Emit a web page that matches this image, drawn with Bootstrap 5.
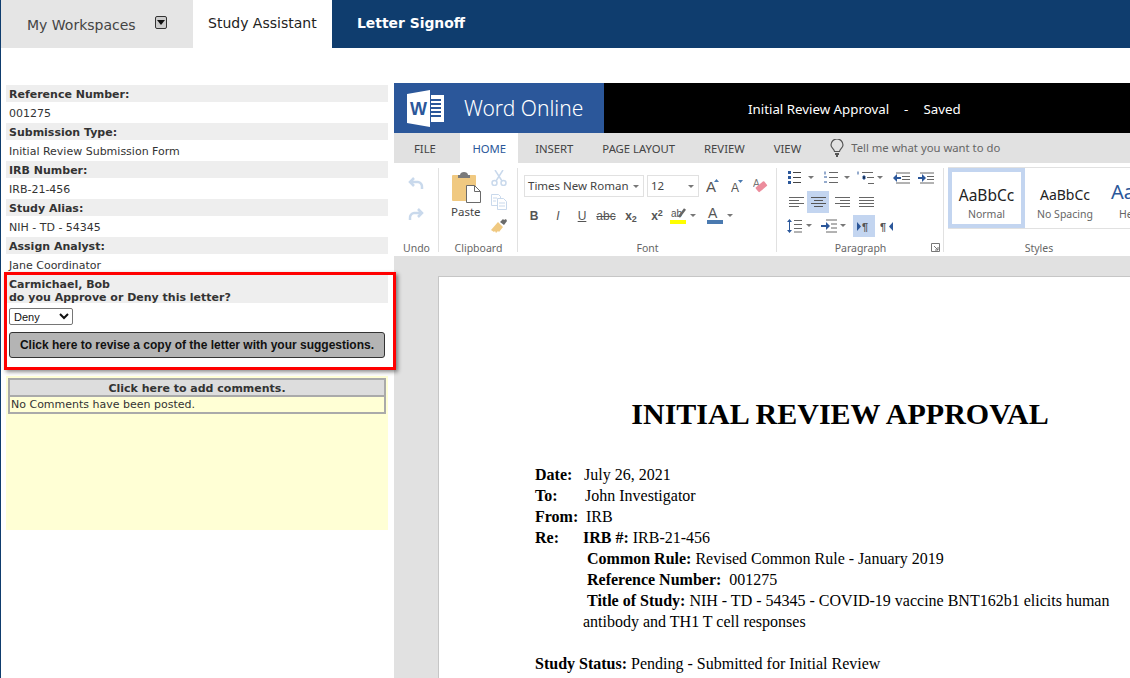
<!doctype html>
<html lang="en"><head><meta charset="utf-8"><title>Letter Signoff</title>
<link href="https://cdn.jsdelivr.net/npm/bootstrap@5.3.0/dist/css/bootstrap.min.css" rel="stylesheet">
<style>
html,body{height:678px;overflow:hidden;background:#fff}
body{font-family:"DejaVu Sans",sans-serif;color:#333;font-size:11px}
.shell{width:1130px;height:678px;border-left:1px solid #0f3d6e;background:#fff;overflow:hidden;position:relative}
.topbar{height:48px;background:#0f3d6e;margin-left:-1px;padding-left:1px;font-size:14px}
.tb-ws{width:192px;background:#e5e5e5;color:#444;padding:15px 0 0 26px}
.tb-sa{width:139px;background:#fff;color:#222;padding:13px 0 0 15px}
.tb-ls{color:#fff;font-weight:700;padding:13px 0 0 25px;font-size:13.9px}
.caret-box{width:12px;height:13px;border:1px solid #333;border-radius:2px;background:#ccc;margin-left:19px;margin-top:1px;display:inline-flex;align-items:center;justify-content:center;vertical-align:top}
.caret-box i{border:4px solid transparent;border-top:5px solid #111;border-bottom:0}
.side{width:393px;flex:none;padding:37px 6px 0 5px}
.lab{height:17px;line-height:20px;background:#eee;font-weight:700;padding-left:3px;color:#333}
.val{height:21px;line-height:24px;padding-left:3px;color:#333}
.lab2{background:#eee;font-weight:700;padding:4px 3px 0;height:29px;line-height:13px;margin-top:-1px;color:#333}
.pick{display:block;width:64px;height:17px;margin:5px 0 0 3px;font:11px "Liberation Sans",sans-serif;color:#111;border:1px solid #767676;border-radius:2px;background:#fff;padding:0}
.revise{display:block;width:376px;height:26px;margin:7px 0 0 3px;padding:0;background:#b4b4b4;border:1px solid #333;border-radius:3px;font:700 12px "Liberation Sans",sans-serif;color:#111}
.cmts{background:#ffffd5;height:154px;margin-top:18px;padding:2px}
.cmt-h{background:#ddd;border:2px solid #aaa;height:19px;line-height:18px;text-align:center;font-weight:700;color:#333}
.cmt-b{border:2px solid #aaa;border-top:0;height:17px;line-height:16px;padding-left:1px;color:#333}
.flag{position:absolute;left:3px;top:272px;width:392px;height:98px;border:3px solid #f00;box-shadow:2px 2px 4px rgba(0,0,0,.45);pointer-events:none}
.word{width:736px;flex:none;margin-top:35px;height:595px;overflow:hidden;background:#e1e1e1;font-family:"Noto Sans",sans-serif;color:#444}
.w-head{height:50px;background:#000;color:#fff}
.w-brand{width:210px;background:#2b579a;padding-left:13px;gap:20px;font-size:21px;line-height:50px;font-weight:300}
.w-title{font-size:13.3px;padding-left:144px;line-height:52px;white-space:nowrap}
.w-dash{margin:0 15px}
.w-tabs{height:30px;font-size:11.3px;line-height:32px;color:#444;white-space:nowrap}
.w-tab{padding:0 14.5px}
.w-tab.t-file{padding:0 24.5px 0 20px}
.w-tab.on{background:#fff;color:#2b579a;padding:0 12px}
.w-tab.t-ins{padding-left:17px}
.w-tell{color:#666;margin-left:14.5px;gap:7px}
.ribbon{height:93px;background:#fff;white-space:nowrap}
.grp{flex:none;height:93px;position:relative}
.grp-sep{background:linear-gradient(#e1e1e1,#e1e1e1) no-repeat right 5px/1px 84px}
.grp-name{position:absolute;left:0;right:0;top:78px;text-align:center;font-size:10.5px;line-height:14px;color:#666}
.g-undo{width:45px}.g-clip{width:79px}.g-font{width:259px}.g-para{width:167px}.g-sty{flex:1 1 auto;padding-left:4px}
.ic{display:block;flex:none}
.undo-col{padding-top:13px;padding-left:14px;gap:14px}
.clip-l{padding:8px 0 0 13px;width:52px}
.clip-l span{font-size:11.5px;color:#444;margin:0 0 0 -1px}
.clip-r{padding-top:7px;gap:8px}
.fbox{height:22px;border:1px solid #e1e1e1;font-size:11.5px;color:#444;padding-left:3px;line-height:20px;margin-top:12px;position:relative;flex:none}
.fbox i{position:absolute;right:4px;top:9px;border:3px solid transparent;border-top:3px solid #777;border-bottom:0}
.fb1{width:120px;margin-left:6px}.fb2{width:52px;margin-left:3px}
.a-g{margin-top:8px;margin-left:7px}
.a-s{margin-top:8px;margin-left:11px}
.a-e{margin-top:8px;margin-left:8px}
.frow{align-items:center}
.fi{font-family:"Liberation Sans",sans-serif;text-align:center;flex:none;color:#555;width:24px;line-height:18px;font-size:12px}
.fi-x{width:26px}
.row-2{margin:9px 0 0 4px}
.hl{margin-left:-1px}
.fc{margin-left:7px}
.p-wrap{padding-top:3px}
.p-row{height:24px;padding-left:10px;align-items:center}
.p-row2{padding-left:8px}
.p-on{background:#c3d5f0}
.p-cell{width:22px;height:22px;display:flex;align-items:center;justify-content:center;flex:none}
.m1{margin-left:1px}.m2{margin-left:2px}.m4{margin-left:4px}.m6{margin-left:6px}.m8{margin-left:8px}
.launch{position:absolute;right:4px;top:80px}
.gal{margin-top:4px;height:62px;border:1px solid #e1e1e1;border-left:0;border-right:0;display:flex;overflow:hidden}
.sty{flex:none;text-align:center;color:#222;font-size:14px;line-height:18px;padding-top:18px;width:78px}
.sty small{display:block;font-size:10.5px;color:#666;line-height:14px;margin-top:3px}
.sty-on{box-sizing:border-box;width:77px;border:4px solid #c3d5f0;padding-top:14px;margin-right:1px;font-size:15.5px}
.sty-h{color:#2b579a;font-size:20px;padding:12px 0 0 7px;line-height:24px;width:30px;text-align:left}
.sty-h small{margin-top:3px;padding-left:8px}
.stage{height:422px;padding:20px 0 0 44px;overflow:hidden}
.page{width:804px;height:500px;background:#fff;border:1px solid #c6c6c6;padding:119px 0 0 96px;font-family:"Liberation Serif",serif;color:#000;font-size:16px;line-height:21px;white-space:nowrap}
.page h1{font:700 30px/36px "Liberation Serif",serif;text-align:center;margin:0 0 32px -96px}
.page b{font-weight:700}
.l{display:inline-block}.l49{width:49px}.l50{width:50px}.l51{width:51px}.l48{width:48px}
.ind{padding-left:52px}.ind2{padding-left:48px}
.gapline{margin-top:21px}
</style></head><body>
<div class="shell">
 <div class="topbar d-flex">
  <div class="tb-ws">My Workspaces<span class="caret-box"><i></i></span></div>
  <div class="tb-sa">Study Assistant</div>
  <div class="tb-ls">Letter Signoff</div>
 </div>
 <div class="d-flex">
  <div class="side">
   <div class="lab">Reference Number:</div><div class="val">001275</div>
   <div class="lab">Submission Type:</div><div class="val">Initial Review Submission Form</div>
   <div class="lab">IRB Number:</div><div class="val">IRB-21-456</div>
   <div class="lab">Study Alias:</div><div class="val">NIH - TD - 54345</div>
   <div class="lab">Assign Analyst:</div><div class="val">Jane Coordinator</div>
   <div class="lab2">Carmichael, Bob<br>do you Approve or Deny this letter?</div>
   <select class="pick"><option>Deny</option><option>Approve</option></select>
   <button class="revise" type="button">Click here to revise a copy of the letter with your suggestions.</button>
   <div class="cmts">
    <div class="cmt-h">Click here to add comments.</div>
    <div class="cmt-b">No Comments have been posted.</div>
   </div>
  </div>
  <div class="word">
   <div class="w-head d-flex">
    <div class="w-brand d-flex">
     <svg class="ic align-self-center" width="37" height="37" viewBox="0 0 37 37"><path fill="#fff" d="M23 0 0 4v29l23 4z"/><path fill="#fff" d="M24 5h13v27H24z"/><path stroke="#2b579a" stroke-width="2" d="M24 10h10M24 14h10M24 18h10M24 22h10M24 26h10"/><text x="3" y="25" font-family="Liberation Sans" font-weight="700" font-size="18" fill="#2b579a">W</text></svg>
     <span>Word Online</span>
    </div>
    <div class="w-title">Initial Review Approval<span class="w-dash">-</span>Saved</div>
   </div>
   <div class="w-tabs d-flex">
    <div class="w-tab t-file">FILE</div><div class="w-tab on">HOME</div><div class="w-tab t-ins">INSERT</div><div class="w-tab">PAGE LAYOUT</div><div class="w-tab">REVIEW</div><div class="w-tab">VIEW</div>
    <div class="w-tell d-flex align-items-center"><svg class="ic" width="14" height="18" viewBox="0 0 14 18"><path fill="none" stroke="#555" stroke-width="1.2" d="M4.500 12.500C4 9.500 1 9 1 6a6 6 0 0 1 12 0c0 3-3 3.500-3.500 6.500z"/><path stroke="#555" stroke-width="2" d="M5 15h4M6 17h2"/></svg><span>Tell me what you want to do</span></div>
   </div>
   <div class="ribbon d-flex">
    <div class="grp grp-sep g-undo">
     <div class="undo-col d-flex flex-column">
      <svg class="ic" width="16" height="16" viewBox="0 0 16 16"><path fill="none" stroke="#c9d9ec" stroke-width="2.500" d="M6 2 2 6l4 4M2 6h8a4.500 4.500 0 0 1 4 5v2"/></svg>
      <svg class="ic" width="16" height="16" viewBox="0 0 16 16"><path fill="none" stroke="#c9d9ec" stroke-width="2.500" d="m10 3 4 4-4 4M14 7H6a4.500 4.500 0 0 0-4 5v2"/></svg>
     </div>
     <div class="grp-name">Undo</div>
    </div>
    <div class="grp grp-sep g-clip d-flex">
     <div class="clip-l d-flex flex-column">
      <svg class="ic" width="30" height="32" viewBox="0 0 30 32"><rect y="4" width="24" height="26" rx="1" fill="#f0c981"/><path fill="#7a7a7a" d="M6 4h2c0-4 8-4 8 0h2v3H6z"/><path fill="#fff" stroke="#6a6a6a" d="M14.500 14.500h8l6 6v11h-14z"/><path fill="none" stroke="#6a6a6a" d="M22.500 14.500v6h6"/></svg>
      <span>Paste</span>
     </div>
     <div class="clip-r d-flex flex-column">
      <svg class="ic" width="16" height="16" viewBox="0 0 16 16"><g fill="none" stroke="#c9d9ec" stroke-width="1.500"><circle cx="3.500" cy="13" r="2.500"/><circle cx="12.500" cy="13" r="2.500"/><path d="M5 11 12 0M11 11 4 0"/></g></svg>
      <svg class="ic" width="16" height="16" viewBox="0 0 16 16"><g fill="#fff" stroke="#c9d9ec"><path d="M.5.5h7l2 2v9h-9z"/><path d="M6.500 4.500h6l3 3v8h-9z"/><path d="M2 4h4M2 7h3M8 9h6M8 12h6"/></g></svg>
      <svg class="ic" width="16" height="16" viewBox="0 0 16 16"><path fill="#f0c981" d="M0 12 7 4l5 5-4 5-1-1-2 2-1-2-1 1z"/><path fill="#6a6a6a" d="m9 4 3-3 1 1 2-1 1 2-3 4z"/></svg>
     </div>
     <div class="grp-name">Clipboard</div>
    </div>
    <div class="grp grp-sep g-font">
     <div class="d-flex">
      <div class="fbox fb1">Times New Roman<i></i></div>
      <div class="fbox fb2">12<i></i></div>
      <svg class="ic a-g" width="14" height="26" viewBox="0 0 14 26"><text x="0" y="21" font-family="Liberation Sans" font-size="15" fill="#555">A</text><path fill="#4a7ab0" d="m8 11 2.500-3 2.500 3z"/></svg>
      <svg class="ic a-s" width="14" height="26" viewBox="0 0 14 26"><text x="0" y="21" font-family="Liberation Sans" font-size="12" fill="#555">A</text><path fill="#4a7ab0" d="m7 9 2.500 3 2.500-3z"/></svg>
      <svg class="ic a-e" width="18" height="26" viewBox="0 0 18 26"><text x="0" y="16" font-family="Liberation Sans" font-size="10" fill="#777">A</text><rect x="3" y="13" width="11" height="6" rx="1" fill="#ec8c9c" transform="rotate(-40 8 16)"/></svg>
     </div>
     <div class="d-flex frow row-2">
      <div class="fi fw-bold">B</div><div class="fi fst-italic">I</div><div class="fi text-decoration-underline">U</div><div class="fi text-decoration-line-through">abc</div>
      <div class="fi fi-x fw-bold">x<sub>2</sub></div><div class="fi fi-x fw-bold">x<sup>2</sup></div>
      <svg class="ic hl" width="30" height="20" viewBox="0 0 30 20"><text x="2" y="11" font-family="Liberation Sans" font-size="10" fill="#555">ab</text><path stroke="#666" stroke-width="2.500" d="m10 11 6-8"/><rect x="1" y="14" width="16" height="4" fill="#ff0"/><path fill="#777" d="m21 8 3 3 3-3z"/></svg>
      <svg class="ic fc" width="28" height="20" viewBox="0 0 28 20"><text x="2" y="12" font-family="Liberation Sans" font-size="14" fill="#555">A</text><rect x="1" y="14" width="16" height="4" fill="#4a7ab0"/><path fill="#777" d="m21 8 3 3 3-3z"/></svg>
     </div>
     <div class="grp-name">Font</div>
    </div>
    <div class="grp grp-sep g-para">
     <div class="p-wrap">
      <div class="p-row d-flex">
       <svg class="ic" width="30" height="14" viewBox="0 0 30 14"><path fill="#2b579a" d="M1 0h3v3H1zM1 5h3v3H1zM1 10h3v3H1z"/><path stroke="#444" d="M6 1.500h8M6 6.500h8M6 11.500h8"/><path fill="#777" d="m21 5 3 3 3-3z"/></svg>
       <svg class="ic m6" width="30" height="14" viewBox="0 0 30 14"><path stroke="#2b579a" d="M2 .5v3M1 6h3M1 11h3"/><path stroke="#666" d="M6 1.500h9M6 6.500h9M6 11.500h9"/><path fill="#777" d="m21 5 3 3 3-3z"/></svg>
       <svg class="ic m4" width="30" height="14" viewBox="0 0 30 14"><path stroke="#2b579a" d="M1 .5v3M6 5h2v3H6z"/><path stroke="#666" d="M5 1.500h11M10 6.500h7M11 12.500h6"/><path fill="#777" d="m20 5 3 3 3-3z"/></svg>
       <svg class="ic m6" width="18" height="12" viewBox="0 0 18 12"><path fill="#2b579a" d="m0 6 4-4v3h4v2H4v3z"/><path stroke="#666" d="M3 1h14M9 4.500h8M9 7.500h8M3 11h14"/></svg>
       <svg class="ic m6" width="18" height="12" viewBox="0 0 18 12"><path fill="#2b579a" d="m9 6-4-4v3H1v2h4v3z"/><path stroke="#666" d="M3 1h14M10 4.500h7M10 7.500h7M3 11h14"/></svg>
      </div>
      <div class="p-row p-row2 d-flex">
       <div class="p-cell"><svg class="ic" width="15" height="11" viewBox="0 0 15 11"><path stroke="#666" d="M0 .5h15M0 3.500h10M0 6.500h15M0 9.500h10"/></svg></div>
       <div class="p-cell p-on"><svg class="ic" width="15" height="11" viewBox="0 0 15 11"><path stroke="#555" d="M0 .5h15M3 3.500h9M0 6.500h15M3 9.500h9"/></svg></div>
       <div class="p-cell m2"><svg class="ic" width="15" height="11" viewBox="0 0 15 11"><path stroke="#666" d="M0 .5h15M5 3.500h10M0 6.500h15M5 9.500h10"/></svg></div>
       <div class="p-cell m2"><svg class="ic" width="15" height="11" viewBox="0 0 15 11"><path stroke="#666" d="M0 .5h15M0 3.500h15M0 6.500h15M0 9.500h15"/></svg></div>
      </div>
      <div class="p-row d-flex">
       <svg class="ic" width="26" height="16" viewBox="0 0 26 16"><path stroke="#2b579a" d="M2.500 2v12"/><path fill="#2b579a" d="m0 4 2.500-3L5 4zM0 12l2.500 3L5 12z"/><path stroke="#666" d="M7 2.500h8M7 6.500h8M7 10.500h8M7 14h8"/><path fill="#777" d="m19 6 3 3 3-3z"/></svg>
       <svg class="ic m8" width="26" height="14" viewBox="0 0 26 14"><path fill="#2b579a" d="m9 7-4-4v3H0v2h5v3z"/><path stroke="#666" d="M5 1h11M10 5h6M10 9h6M5 13h11"/><path fill="#777" d="m19 5 3 3 3-3z"/></svg>
       <div class="p-cell p-on m6"><svg class="ic" width="14" height="11" viewBox="0 0 14 11"><path fill="#2b579a" d="m0 1 4 4.500L0 10z"/><text x="5" y="10" font-family="Liberation Sans" font-size="11" font-weight="700" fill="#555">¶</text></svg></div>
       <div class="p-cell m1"><svg class="ic" width="14" height="11" viewBox="0 0 14 11"><text x="0" y="10" font-family="Liberation Sans" font-size="11" font-weight="700" fill="#555">¶</text><path fill="#2b579a" d="M13 1 9 5.500l4 4.500z"/></svg></div>
      </div>
     </div>
     <svg class="launch ic" width="9" height="9" viewBox="0 0 9 9"><path fill="none" stroke="#777" d="M.5 8.500v-8h8v8zM3 3l4 4M7 4v3H4"/></svg>
     <div class="grp-name">Paragraph</div>
    </div>
    <div class="grp g-sty">
     <div class="gal">
      <div class="sty sty-on">AaBbCc<small>Normal</small></div>
      <div class="sty">AaBbCc<small>No Spacing</small></div>
      <div class="sty sty-h">Aa<small>He</small></div>
     </div>
     <div class="grp-name">Styles</div>
    </div>
   </div>
   <div class="stage">
    <div class="page">
     <h1>INITIAL REVIEW APPROVAL</h1>
     <div><b class="l l49">Date:</b>July 26, 2021</div>
     <div><b class="l l50">To:</b>John Investigator</div>
     <div><b class="l l51">From:</b>IRB</div>
     <div><b class="l l48">Re:</b><b>IRB #:</b> IRB-21-456</div>
     <div class="ind"><b>Common Rule:</b> Revised Common Rule - January 2019</div>
     <div class="ind"><b>Reference Number:</b>&nbsp; 001275</div>
     <div class="ind"><b>Title of Study:</b> NIH - TD - 54345 - COVID-19 vaccine BNT162b1 elicits human</div>
     <div class="ind2">antibody and TH1 T cell responses</div>
     <div class="gapline"><b>Study Status:</b> Pending - Submitted for Initial Review</div>
    </div>
   </div>
  </div>
 </div>
 <div class="flag"></div>
</div>
<script src="https://cdn.jsdelivr.net/npm/bootstrap@5.3.0/dist/js/bootstrap.bundle.min.js"></script>
</body></html>
